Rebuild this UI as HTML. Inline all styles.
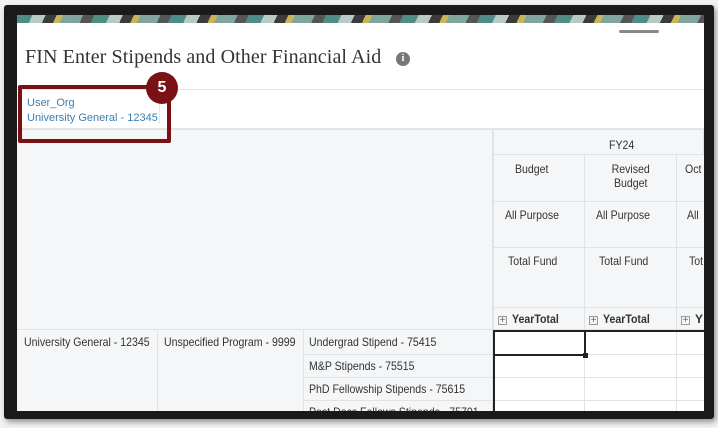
<!DOCTYPE html>
<html><head><style>
*{margin:0;padding:0;box-sizing:border-box}
body{width:718px;height:428px;background:#f2f2f2;position:relative;overflow:hidden;font-family:"Liberation Sans",sans-serif}
.frame{position:absolute;left:4px;top:5px;width:710px;height:414px;background:#1a1a1a;border-radius:3px;box-shadow:2px 3px 6px rgba(0,0,0,.4)}
.in{position:absolute;left:17px;top:15px;width:687px;height:396px;background:#fff;overflow:hidden}
.banner{position:absolute;left:0;top:0;width:100%;height:8px;background:repeating-linear-gradient(115deg,#4f8c86 0 14px,#b9c9c5 14px 26px,#3b3b3b 26px 36px,#c9b45a 36px 42px,#7fa59e 42px 60px,#555 60px 70px)}
.handle{position:absolute;left:602px;top:15px;width:40px;height:3px;background:#888;border-radius:2px}
h1{position:absolute;left:8px;top:31px;font:20px "Liberation Serif",serif;color:#333;white-space:nowrap;letter-spacing:0.1px}
.info{position:absolute;left:379px;top:37px;width:14px;height:14px;border-radius:50%;background:#777;color:#fff;font:bold 10px "Liberation Serif",serif;text-align:center;line-height:14px}
.pov{position:absolute;left:0;top:74px;width:100%;height:40px;border-top:1px solid #e3e6e8;border-bottom:1px solid #e3e6e8}
.pov div{position:absolute;left:10px;font-size:11px;color:#3a7fb3;white-space:nowrap}
.c{position:absolute;border-right:1px solid #dfe3e6;border-bottom:1px solid #dfe3e6;font-size:12px;color:#333;white-space:nowrap}
.n{display:inline-block;transform:scaleX(.88);transform-origin:left}
.red{position:absolute;left:18px;top:85px;width:153px;height:58px;border:4px solid #7a1114;border-radius:2px}
.badge{position:absolute;left:146px;top:72px;width:32px;height:32px;border-radius:50%;background:#7a1114;color:#fff;font:bold 16px "Liberation Sans",sans-serif;text-align:center;line-height:32px}
.pl{font-weight:normal;font-size:10px;color:#666;border:1px solid #999;display:inline-block;width:9px;height:9px;line-height:7px;text-align:center;margin-right:5px}
</style></head><body>
<div class="frame"></div>
<div class="in">
<div class="banner"></div>
<div class="handle"></div>
<h1>FIN Enter Stipends and Other Financial Aid</h1>
<div class="info">i</div>
<div class="pov"><div style="top:7px">User_Org</div><div style="top:22px">University General - 12345</div><span style="position:absolute;left:142px;top:4px;height:30px;border-left:1px solid #e3e6e8"></span></div>
<div style="position:absolute;left:0;top:114px;width:687px;height:201px;background:#f5f6f7;border-top:1px solid #dfe3e6"></div>
<div class="c" style="left:0;top:115px;width:476px;height:200px"></div>
<div class="c" style="left:476px;top:115px;width:211px;height:25px;padding:8px 0 0 115px;border-left:1px solid #dfe3e6"><span class="n">FY24</span></div>
<div class="c" style="left:476px;top:140px;width:92px;height:47px;padding:7px 0 0 21px;border-left:1px solid #dfe3e6"><span class="n">Budget</span></div>
<div class="c" style="left:568px;top:140px;width:92px;height:47px;text-align:center;padding-top:7px;line-height:14px"><span class="n" style="transform-origin:center">Revised<br>Budget</span></div>
<div class="c" style="left:660px;top:140px;width:40px;height:47px;padding:7px 0 0 8px"><span class="n">Oct</span></div>
<div class="c" style="left:476px;top:187px;width:92px;height:46px;padding:6px 0 0 11px;border-left:1px solid #dfe3e6"><span class="n">All Purpose</span></div>
<div class="c" style="left:568px;top:187px;width:92px;height:46px;padding:6px 0 0 11px"><span class="n">All Purpose</span></div>
<div class="c" style="left:660px;top:187px;width:40px;height:46px;padding:6px 0 0 10px"><span class="n">All</span></div>
<div class="c" style="left:476px;top:233px;width:92px;height:60px;padding:6px 0 0 14px;border-left:1px solid #dfe3e6"><span class="n">Total Fund</span></div>
<div class="c" style="left:568px;top:233px;width:92px;height:60px;padding:6px 0 0 14px"><span class="n">Total Fund</span></div>
<div class="c" style="left:660px;top:233px;width:40px;height:60px;padding:6px 0 0 12px"><span class="n">Tot</span></div>
<div class="c" style="left:476px;top:293px;width:92px;height:22px;padding:4px 0 0 4px;font-weight:bold;border-left:1px solid #dfe3e6"><span class="pl">+</span><span class="n">YearTotal</span></div>
<div class="c" style="left:568px;top:293px;width:92px;height:22px;padding:4px 0 0 4px;font-weight:bold"><span class="pl">+</span><span class="n">YearTotal</span></div>
<div class="c" style="left:660px;top:293px;width:40px;height:22px;padding:4px 0 0 4px;font-weight:bold"><span class="pl">+</span>Y</div>
<div class="c" style="left:0;top:315px;width:141px;height:90px;background:#f5f6f7;padding:5px 0 0 7px"><span class="n">University General - 12345</span></div>
<div class="c" style="left:141px;top:315px;width:146px;height:90px;background:#f5f6f7;padding:5px 0 0 6px"><span class="n">Unspecified Program - 9999</span></div>
<div class="c" style="left:287px;top:315px;width:189px;height:25px;background:#f5f6f7;padding:5px 0 0 5px"><span class="n">Undergrad Stipend - 75415</span></div>
<div class="c" style="left:287px;top:340px;width:189px;height:23px;background:#f5f6f7;padding:4px 0 0 5px"><span class="n">M&amp;P Stipends - 75515</span></div>
<div class="c" style="left:287px;top:363px;width:189px;height:23px;background:#f5f6f7;padding:4px 0 0 5px"><span class="n">PhD Fellowship Stipends - 75615</span></div>
<div class="c" style="left:287px;top:386px;width:189px;height:23px;background:#f5f6f7;padding:4px 0 0 5px"><span class="n">Post Docs Fellows Stipends - 75701</span></div>
<div class="c" style="left:476px;top:340px;width:92px;height:23px"></div><div class="c" style="left:568px;top:340px;width:92px;height:23px"></div><div class="c" style="left:660px;top:340px;width:40px;height:23px"></div>
<div class="c" style="left:476px;top:363px;width:92px;height:23px"></div><div class="c" style="left:568px;top:363px;width:92px;height:23px"></div><div class="c" style="left:660px;top:363px;width:40px;height:23px"></div>
<div class="c" style="left:476px;top:386px;width:92px;height:23px"></div><div class="c" style="left:568px;top:386px;width:92px;height:23px"></div><div class="c" style="left:660px;top:386px;width:40px;height:23px"></div>
<div class="c" style="left:568px;top:315px;width:92px;height:25px"></div><div class="c" style="left:660px;top:315px;width:40px;height:25px"></div>
<div style="position:absolute;left:476px;top:315px;width:220px;height:90px;border-left:2px solid #222;border-top:2px solid #222"></div>
<div style="position:absolute;left:476px;top:315px;width:93px;height:26px;border:2px solid #222"></div>
<div style="position:absolute;left:566px;top:338px;width:5px;height:5px;background:#222"></div>
</div>
<div class="red"></div>
<div class="badge">5</div>
</body></html>
